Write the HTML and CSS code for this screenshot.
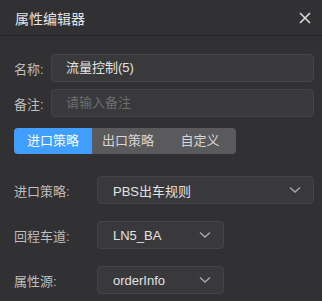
FILE: index.html
```html
<!DOCTYPE html>
<html>
<head>
<meta charset="utf-8">
<title>属性编辑器</title>
<link rel="stylesheet" href="styles.css">
</head>
<body>
<div class="panel">
  <div class="panel-head">
    <span class="panel-title">属性编辑器</span>
    <svg class="close" width="12" height="12" viewBox="0 0 12 12"><path d="M1 1L11 11M11 1L1 11" stroke="#d8d8d8" stroke-width="1.6" fill="none"/></svg>
  </div>
  <div class="panel-body">
    <div class="field">
      <label class="field-label">名称:</label>
      <div class="input">流量控制(5)</div>
    </div>
    <div class="field">
      <label class="field-label">备注:</label>
      <div class="input placeholder">请输入备注</div>
    </div>
    <div class="tabs">
      <div class="tab active">进口策略</div>
      <div class="tab t2">出口策略</div>
      <div class="tab t3">自定义</div>
    </div>
    <div class="select-row first">
      <label class="select-label">进口策略:</label>
      <div class="select wide"><span>PBS出车规则</span><svg width="12" height="8" viewBox="0 0 12 8"><path d="M1 1.5L6 6L11 1.5" stroke="#a8a8aa" stroke-width="1.4" fill="none"/></svg></div>
    </div>
    <div class="select-row">
      <label class="select-label">回程车道:</label>
      <div class="select narrow"><span>LN5_BA</span><svg width="12" height="8" viewBox="0 0 12 8"><path d="M1 1.5L6 6L11 1.5" stroke="#a8a8aa" stroke-width="1.4" fill="none"/></svg></div>
    </div>
    <div class="select-row">
      <label class="select-label">属性源:</label>
      <div class="select narrow"><span>orderInfo</span><svg width="12" height="8" viewBox="0 0 12 8"><path d="M1 1.5L6 6L11 1.5" stroke="#a8a8aa" stroke-width="1.4" fill="none"/></svg></div>
    </div>
  </div>
</div>
</body>
</html>
```
FILE: styles.css
```css
html, body { margin: 0; padding: 0; background: #313133; }
body { font-family: "Liberation Sans", "Noto Sans CJK SC", sans-serif; font-size: 13px; color: #bdbdbd; }
.panel { width: 322px; height: 301px; overflow: hidden; }
.panel-head { height: 35px; border-bottom: 1px solid #262628; display: flex; align-items: center; justify-content: space-between; padding: 0 11px 0 15px; }
.panel-title { font-size: 14px; color: #e4e4e4; }
.close { display: block; }
.panel-body { padding: 18px 8px 0 14px; }
.field { display: flex; align-items: center; margin-bottom: 7px; }
.field-label { width: 37px; flex: none; }
.input { flex: 1; height: 26px; line-height: 26px; border: 1px solid #444446; border-radius: 4px; background: #39393b; padding-left: 14px; color: #e2e2e2; }
.input.placeholder { color: #6e6e70; }
.tabs { display: flex; margin-top: 11px; height: 26px; }
.tab { width: 72px; line-height: 26px; text-align: center; background: #5a5a5c; color: #d6d6d6; }
.tab.active { width: 78px; background: #409eff; color: #fff; border-radius: 4px 0 0 4px; }
.tab.t3 { border-radius: 0 4px 4px 0; }
.select-row { display: flex; align-items: center; margin-top: 17px; }
.select-row.first { margin-top: 22px; }
.select-label { width: 83px; flex: none; }
.select { height: 26px; border: 1px solid #444446; border-radius: 4px; background: #39393b; display: flex; align-items: center; justify-content: space-between; padding: 0 12px 0 15px; color: #e2e2e2; box-sizing: content-box; }
.select.wide { flex: 1; }
.select.narrow { width: 98px; }
.select svg { display: block; }
```
